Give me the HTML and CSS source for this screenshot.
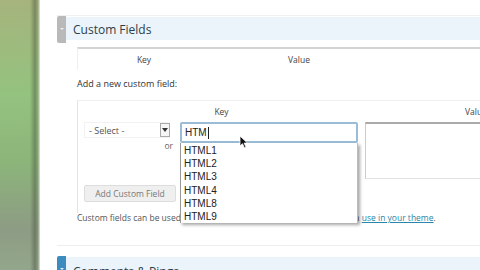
FILE: index.html
```html
<!DOCTYPE html>
<html lang="en">
<head>
    <meta charset="UTF-8">
    <title>Custom Fields</title>
    <link rel="stylesheet" href="styles.css">
</head>
<body>
    <div class="screen">
        <div class="side"></div>
        <div class="page">
            <div class="postbox">
                <div class="handle"></div>
                <div class="postbox-main">
                    <h3 class="postbox-title">Custom Fields</h3>
                    <div class="inside">
                        <div class="list-head">
                            <span class="col-key">Key</span>
                            <span class="col-value">Value</span>
                        </div>
                        <p class="add-label">Add a new custom field:</p>
                        <div class="new-meta">
                            <div class="meta-head">
                                <span class="mh-key">Key</span>
                                <span class="mh-val">Value</span>
                            </div>
                            <div class="meta-row">
                                <div class="key-col">
                                    <div class="select">
                                        <span>- Select -</span>
                                        <span class="arrow"><svg width="6" height="4" viewBox="0 0 6 4"><path d="M0 0h6L3 4z" fill="#333"/></svg></span>
                                    </div>
                                    <span class="or">or</span>
                                </div>
                                <div class="key-input-wrap">
                                    <div class="key-input">HTM<span class="caret"></span></div>
                                    <ul class="suggest">
                                        <li>HTML1</li>
                                        <li>HTML2</li>
                                        <li>HTML3</li>
                                        <li>HTML4</li>
                                        <li>HTML8</li>
                                        <li>HTML9</li>
                                    </ul>
                                    <svg class="cursor" width="10" height="14" viewBox="0 0 10 14"><path d="M1 1v10l2.5-2.3 2 4.3 1.6-.7-2-4.2H8.5z" fill="#111" stroke="#fff" stroke-width="0.8"/></svg>
                                </div>
                                <div class="value-input"></div>
                            </div>
                            <button class="add-btn">Add Custom Field</button>
                        </div>
                        <p class="note">Custom fields can be used to add extra metadata to a post that you can <a href="#">use in your theme</a>.</p>
                    </div>
                </div>
            </div>

            <div class="postbox postbox-next">
                <div class="handle handle-blue"></div>
                <div class="postbox-main">
                    <h3 class="postbox-title">Comments &amp; Pings</h3>
                </div>
            </div>
        </div>
        <div class="edge"></div>
    </div>
</body>
</html>
```

FILE: styles.css
```css
body {
    margin: 0;
    padding: 0;
    font-family: 'Open Sans', 'DejaVu Sans', sans-serif;
    color: #333;
    background-color: #fff;
}
.screen {
    display: flex;
    width: 480px;
    height: 270px;
    overflow: hidden;
}
.side {
    width: 40px;
    flex-shrink: 0;
    background:
        linear-gradient(90deg, rgba(0, 0, 0, 0) 0, rgba(0, 0, 0, 0) 30px, rgba(70, 80, 60, 0.45) 35px, rgba(120, 130, 110, 0.25) 38px, rgba(235, 238, 230, 0.9) 40px),
        linear-gradient(180deg, #a6b47c 0, #94c27f 35%, #8cb57a 60%, #8d9c84 85%, #93a78c 100%);
}
.page {
    flex: 1;
    padding: 15px 0 0 17px;
    background-color: #fff;
}
.edge {
    width: 3px;
    flex-shrink: 0;
    background-color: #111;
}
.postbox {
    display: flex;
    border-top: 1px solid #f0f0f0;
}
.handle {
    width: 9px;
    height: 27px;
    flex-shrink: 0;
    background-color: #b9b9b9;
    border-radius: 2px 0 0 2px;
    position: relative;
}
.handle::after {
    content: "";
    position: absolute;
    left: 3px;
    top: 12px;
    border-left: 2px solid transparent;
    border-right: 2px solid transparent;
    border-top: 2px solid #eee;
}
.handle-blue {
    background-color: #3d8cbf;
}
.postbox-main {
    flex: 1;
    padding-top: 1px;
}
.postbox-title {
    margin: 0;
    height: 23px;
    line-height: 25px;
    padding-left: 7px;
    font-size: 12px;
    font-weight: normal;
    color: #2d3e4a;
    background-color: #eaf4fa;
}
.inside {
    padding: 7px 0 0 11px;
}
.list-head {
    display: flex;
    height: 21px;
    align-items: center;
    border-top: 2px solid #d4d4d4;
    border-left: 1px solid #eee;
    font-size: 8.5px;
    color: #444;
}
.col-key {
    width: 132px;
    text-align: center;
}
.col-value {
    padding-left: 78px;
}
.add-label {
    margin: 7px 0 0 0;
    font-size: 9px;
    color: #333;
}
.new-meta {
    margin-top: 10px;
    border-top: 1px solid #f0f0f0;
    border-left: 1px solid #e4e4e4;
    padding: 0 0 0 6px;
    height: 112px;
}
.meta-head {
    display: flex;
    height: 20px;
    align-items: center;
    font-size: 8.5px;
    color: #444;
}
.mh-key {
    width: 275px;
    text-align: center;
}
.mh-val {
    padding-left: 106px;
}
.meta-row {
    display: flex;
    margin-top: 1px;
}
.key-col {
    width: 96px;
    display: flex;
    flex-direction: column;
    align-items: flex-end;
}
.select {
    width: 86px;
    height: 16px;
    margin-right: 10px;
    box-sizing: border-box;
    display: flex;
    align-items: center;
    justify-content: space-between;
    padding-left: 4px;
    font-size: 9px;
    color: #555;
    border: 1px solid #f2f2f2;
    border-right: none;
}
.arrow {
    width: 10px;
    height: 14px;
    display: flex;
    align-items: center;
    justify-content: center;
    border: 1px solid #aaa;
    background-color: #f6f6f6;
    box-sizing: border-box;
}
.or {
    margin: 2px 7px 0 0;
    font-size: 8.5px;
    color: #666;
}
.key-input-wrap {
    position: relative;
    width: 178px;
}
.key-input {
    height: 21px;
    box-sizing: border-box;
    border: 2px solid #9bbcd6;
    border-radius: 2px;
    padding: 0 0 0 3px;
    display: flex;
    align-items: center;
    font-family: 'Liberation Sans', sans-serif;
    font-size: 10px;
    color: #222;
}
.caret {
    width: 1px;
    height: 12px;
    margin-left: 1px;
    background-color: #222;
}
.suggest {
    position: absolute;
    left: 0;
    top: 21px;
    width: 178px;
    height: 80px;
    box-sizing: border-box;
    margin: 0;
    padding: 1px 0 0 3px;
    list-style: none;
    background-color: #fff;
    border-left: 1px solid #999;
    border-right: 1px solid #bbb;
    box-shadow: 2px 2px 3px rgba(0, 0, 0, 0.35);
    font-family: 'Liberation Sans', sans-serif;
    font-size: 10px;
    line-height: 13.2px;
    color: #222;
    z-index: 2;
}
.cursor {
    position: absolute;
    left: 59px;
    top: 13px;
    z-index: 3;
}
.value-input {
    width: 120px;
    height: 57px;
    margin-left: 7px;
    box-sizing: border-box;
    border: 1px solid #e2e2e2;
    border-top: 2px solid #aaa;
    border-left: 1px solid #ccc;
}
.add-btn {
    display: block;
    margin-top: 6px;
    width: 92px;
    height: 17px;
    padding: 0;
    font-family: 'Open Sans', 'DejaVu Sans', sans-serif;
    font-size: 8.5px;
    color: #777;
    background-color: #efefef;
    border: 1px solid #ddd;
    border-radius: 2px;
}
.note {
    margin: -1px 0 0 0;
    font-size: 8.5px;
    color: #555;
}
.note a {
    color: #2b87a8;
}
.postbox-next {
    margin-top: 22px;
    border-top: 1px solid #eee;
}
.postbox-next .postbox-main {
    padding-top: 11px;
}
.postbox-next .postbox-title {
    line-height: 29px;
}
.postbox-next .handle {
    margin-top: 10px;
}
```
